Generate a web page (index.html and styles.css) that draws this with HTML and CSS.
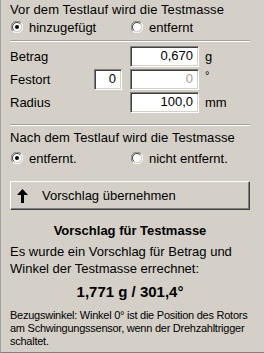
FILE: index.html
```html
<!DOCTYPE html>
<html>

<head>
    <link rel="stylesheet" href="styles.css">
</head>

<body>
    <div class="panel">

        <!-- before test run -->
        <div class="head">Vor dem Testlauf wird die Testmasse</div>
        <div class="radios">
            <label class="radio">
                <svg width="12" height="12" viewBox="0 0 12 12">
                    <path d="M1.8 10.2 A5.5 5.5 0 0 1 10.2 1.8" fill="none" stroke="#808080" />
                    <path d="M10.2 1.8 A5.5 5.5 0 0 1 1.8 10.2" fill="none" stroke="#fff" />
                    <circle cx="6" cy="6" r="4.5" fill="#fff" />
                    <path d="M2.8 9.2 A4.5 4.5 0 0 1 9.2 2.8" fill="none" stroke="#404040" />
                    <path d="M9.2 2.8 A4.5 4.5 0 0 1 2.8 9.2" fill="none" stroke="#d4d0c8" />
                    <circle cx="6" cy="6" r="2" fill="#000" />
                </svg>
                hinzugefügt
            </label>
            <label class="radio">
                <svg width="12" height="12" viewBox="0 0 12 12">
                    <path d="M1.8 10.2 A5.5 5.5 0 0 1 10.2 1.8" fill="none" stroke="#808080" />
                    <path d="M10.2 1.8 A5.5 5.5 0 0 1 1.8 10.2" fill="none" stroke="#fff" />
                    <circle cx="6" cy="6" r="4.5" fill="#fff" />
                    <path d="M2.8 9.2 A4.5 4.5 0 0 1 9.2 2.8" fill="none" stroke="#404040" />
                    <path d="M9.2 2.8 A4.5 4.5 0 0 1 2.8 9.2" fill="none" stroke="#d4d0c8" />
                </svg>
                entfernt
            </label>
        </div>

        <div class="sep"></div>

        <!-- values -->
        <div class="fields">
            <span class="lbl">Betrag</span>
            <span></span>
            <span class="box">0,670</span>
            <span class="unit">g</span>

            <span class="lbl">Festort</span>
            <span class="box small">0</span>
            <span class="box off">0</span>
            <span class="unit deg">°</span>

            <span class="lbl">Radius</span>
            <span></span>
            <span class="box">100,0</span>
            <span class="unit">mm</span>
        </div>

        <div class="sep"></div>

        <!-- after test run -->
        <div class="head second">Nach dem Testlauf wird die Testmasse</div>
        <div class="radios second">
            <label class="radio">
                <svg width="12" height="12" viewBox="0 0 12 12">
                    <path d="M1.8 10.2 A5.5 5.5 0 0 1 10.2 1.8" fill="none" stroke="#808080" />
                    <path d="M10.2 1.8 A5.5 5.5 0 0 1 1.8 10.2" fill="none" stroke="#fff" />
                    <circle cx="6" cy="6" r="4.5" fill="#fff" />
                    <path d="M2.8 9.2 A4.5 4.5 0 0 1 9.2 2.8" fill="none" stroke="#404040" />
                    <path d="M9.2 2.8 A4.5 4.5 0 0 1 2.8 9.2" fill="none" stroke="#d4d0c8" />
                    <circle cx="6" cy="6" r="2" fill="#000" />
                </svg>
                entfernt.
            </label>
            <label class="radio">
                <svg width="12" height="12" viewBox="0 0 12 12">
                    <path d="M1.8 10.2 A5.5 5.5 0 0 1 10.2 1.8" fill="none" stroke="#808080" />
                    <path d="M10.2 1.8 A5.5 5.5 0 0 1 1.8 10.2" fill="none" stroke="#fff" />
                    <circle cx="6" cy="6" r="4.5" fill="#fff" />
                    <path d="M2.8 9.2 A4.5 4.5 0 0 1 9.2 2.8" fill="none" stroke="#404040" />
                    <path d="M9.2 2.8 A4.5 4.5 0 0 1 2.8 9.2" fill="none" stroke="#d4d0c8" />
                </svg>
                nicht entfernt.
            </label>
        </div>

        <!-- apply -->
        <div class="btn">
            <svg width="11" height="14" viewBox="0 0 11 14">
                <polygon points="5.5,0 11,6 7,6 7,14 4,14 4,6 0,6" fill="#000" />
            </svg>
            <span>Vorschlag übernehmen</span>
        </div>

        <!-- proposal -->
        <div class="title">Vorschlag für Testmasse</div>
        <div class="text">Es wurde ein Vorschlag für Betrag und Winkel der Testmasse errechnet:</div>
        <div class="result">1,771 g / 301,4°</div>
        <div class="note">Bezugswinkel: Winkel 0° ist die Position des Rotors am Schwingungssensor, wenn der Drehzahltrigger schaltet.</div>

    </div>
</body>

</html>
```

FILE: styles.css
```css
body {
    margin: 0;
    background: #d4d0c8;
}

.panel {
    width: 264px;
    height: 353px;
    box-sizing: border-box;
    padding: 1px 14px 0 9px;
    background: #d4d0c8;
    border-left: 1px solid #a0a0a0;
    border-bottom: 1px solid #808080;
    font-family: "Liberation Sans", Arial, sans-serif;
    font-size: 13px;
    color: #000;
    overflow: hidden;
}

.head {
    height: 17px;
    line-height: 17px;
    letter-spacing: 0.1px;
}

.head.second {
    margin-top: 3px;
}

.radios {
    display: flex;
    height: 18px;
    align-items: center;
}

.radios.second {
    margin-top: 3px;
}

.radio {
    display: flex;
    align-items: center;
    gap: 6px;
    width: 123px;
    padding-left: 1px;
}

.sep {
    height: 0;
    margin: 4px 0 0 0;
    border-top: 1px solid #a0a0a0;
    border-bottom: 1px solid #fff;
}

.fields {
    display: grid;
    grid-template-columns: 84px 36px 75px 1fr;
    grid-auto-rows: 21px;
    row-gap: 2px;
    margin-top: 4px;
    align-items: center;
}

.box {
    box-sizing: border-box;
    width: 69px;
    height: 21px;
    line-height: 17px;
    padding-right: 5px;
    text-align: right;
    background: #fff;
    border-top: 1px solid #808080;
    border-left: 1px solid #808080;
    border-right: 1px solid #fff;
    border-bottom: 1px solid #fff;
    box-shadow: inset 1px 1px 0 #404040, inset -1px -1px 0 #d4d0c8;
}

.box.small {
    width: 28px;
}

.box.off {
    color: #a0a0a0;
}

.unit.deg {
    align-self: start;
    font-size: 11px;
    line-height: 12px;
}

.fields + .sep {
    margin-top: 11px;
}

.btn {
    display: flex;
    align-items: center;
    height: 29px;
    box-sizing: border-box;
    margin-top: 14px;
    padding-left: 5px;
    border-top: 1px solid #fff;
    border-left: 1px solid #fff;
    border-right: 1px solid #404040;
    border-bottom: 1px solid #404040;
    box-shadow: inset -1px -1px 0 #808080;
}

.btn svg {
    margin-left: 1px;
}

.btn span {
    margin-left: 14px;
}

.title {
    margin-top: 12px;
    text-align: center;
    font-weight: bold;
    line-height: 18px;
}

.text {
    margin-top: 3px;
    line-height: 17px;
}

.result {
    margin-top: 5px;
    text-align: center;
    font-weight: bold;
    font-size: 15px;
    line-height: 20px;
}

.note {
    margin-top: 7px;
    margin-right: -6px;
    font-size: 11px;
    line-height: 13px;
    letter-spacing: -0.25px;
}
```
